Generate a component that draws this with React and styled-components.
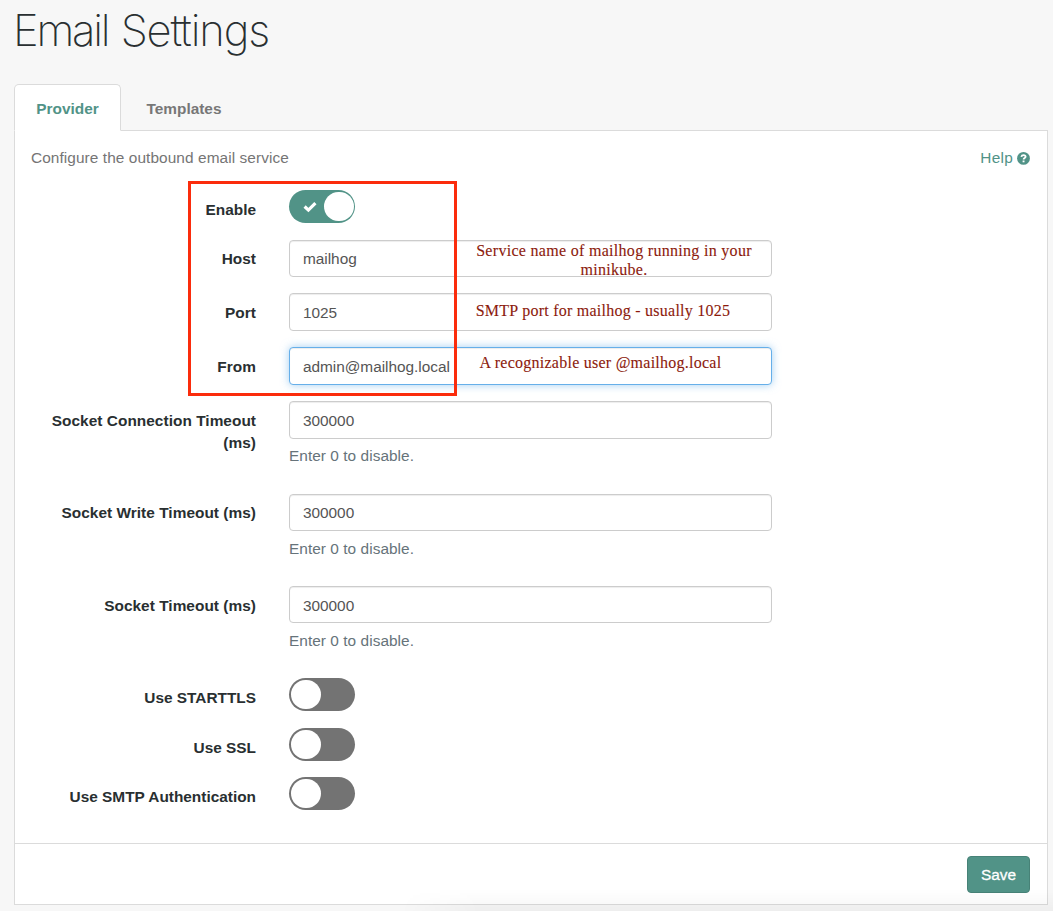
import React from "react";
import styled, { createGlobalStyle, css } from "styled-components";

const GREEN = "#519387";
const LINE = "#dbdbdb";

const GlobalStyle = createGlobalStyle`
  * { box-sizing: border-box; }
  body {
    margin: 0;
    background: #f7f7f7;
    color: #292f31;
    font: 15.4px/22px "Liberation Sans", Arial, sans-serif;
    overflow: hidden;
  }
`;

const Page = styled.main`
  position: relative;
  height: 911px;
  padding: 5px 5px 0 14px;
  display: flex;
  flex-direction: column;
`;

const Title = styled.h1`
  margin: 0 0 29px -1px;
  height: 50px;
  font: 200 43.5px/50px Inter, "Liberation Sans", sans-serif;
  white-space: nowrap;
`;

const Word = styled.span`
  letter-spacing: ${(p) => p.$spacing}px;
`;

const Tabs = styled.nav`
  display: flex;
  height: 47px;
  margin-bottom: -1px;
  position: relative;
`;

const Tab = styled.a`
  display: flex;
  align-items: center;
  justify-content: center;
  width: ${(p) => p.$width}px;
  padding-top: 2px;
  font-weight: bold;
  color: #777;
  border: 1px solid transparent;
  ${(p) =>
    p.$active &&
    css`
      color: ${GREEN};
      background: #fff;
      border-color: ${LINE};
      border-bottom-color: #fff;
      border-radius: 5px 5px 0 0;
    `}
`;

const Panel = styled.section`
  height: 775px;
  background: #fff;
  border: 1px solid ${LINE};
  display: flex;
  flex-direction: column;
`;

const Intro = styled.div`
  display: flex;
  justify-content: space-between;
  padding: 16px 17px 0 16px;
  height: 59px;
  color: #757575;
  letter-spacing: 0.08px;
`;

const HelpLink = styled.a`
  display: flex;
  align-items: center;
  gap: 4px;
  height: 22px;
  color: ${GREEN};
  letter-spacing: 0.25px;
`;

const Row = styled.div`
  display: grid;
  grid-template-columns: 241px 483px;
  column-gap: 33px;
  align-items: start;
  height: ${(p) => p.$height}px;
`;

const Label = styled.label`
  padding: ${(p) => p.$top}px 0 0 16px;
  text-align: right;
  font-weight: bold;
  letter-spacing: ${(p) => p.$spacing ?? 0.04}px;
`;

const Field = styled.div`
  position: relative;
  display: flex;
  flex-direction: column;
`;

const Input = styled.input`
  width: 100%;
  height: ${(p) => (p.$tall ? 38 : 37)}px;
  padding: ${(p) => p.$drop || 0}px 13px 0;
  border: 1px solid #ccc;
  border-radius: 4px;
  background: #fff;
  box-shadow: inset 0 1px 1px rgba(0, 0, 0, 0.075);
  color: #555;
  font: inherit;
  letter-spacing: -0.03px;
  outline: none;
  ${(p) =>
    p.$focused &&
    css`
      border-color: #66afe9;
      box-shadow: inset 0 1px 1px rgba(0, 0, 0, 0.075), 0 0 8px rgba(102, 175, 233, 0.6);
    `}
`;

const Hint = styled.p`
  margin: ${(p) => p.$gap}px 0 0;
  color: #66737a;
  letter-spacing: 0.05px;
`;

const Note = styled.div`
  position: absolute;
  left: ${(p) => p.$left}px;
  top: ${(p) => p.$top}px;
  width: ${(p) => p.$width}px;
  text-align: center;
  white-space: nowrap;
  font: 16px/19px "Liberation Serif", "Times New Roman", serif;
  letter-spacing: ${(p) => p.$spacing}px;
  color: #8c1a0c;
  -webkit-text-stroke: 0.1px #8c1a0c;
`;

const Switch = styled.span`
  display: flex;
  align-items: center;
  justify-content: ${(p) => (p.$on ? "flex-end" : "flex-start")};
  gap: 7px;
  width: 66px;
  height: 33px;
  padding: 0 ${(p) => (p.$on ? 1.5 : 2)}px;
  border-radius: 17px;
  background: ${(p) => (p.$on ? GREEN : "#737373")};
`;

const Knob = styled.span`
  width: 29.5px;
  height: 29.5px;
  border-radius: 50%;
  background: #fff;
`;

const Footer = styled.footer`
  display: flex;
  justify-content: flex-end;
  align-items: flex-start;
  flex: 1;
  padding: 12px 17px 0;
  border-top: 1px solid ${LINE};
`;

const SaveButton = styled.button`
  width: 63px;
  height: 37px;
  padding: 0;
  border: 1px solid #478277;
  border-radius: 4px;
  background: ${GREEN};
  color: #fff;
  font: inherit;
  -webkit-text-stroke: 0.3px #fff;
`;

const Highlight = styled.div`
  position: absolute;
  left: 188px;
  top: 181px;
  width: 269px;
  height: 215px;
  border: 3px solid #fb2c0c;
`;

const BottomShade = styled.div`
  position: absolute;
  left: 400px;
  right: 0;
  bottom: 0;
  height: 22px;
  pointer-events: none;
  background: linear-gradient(to bottom, transparent, rgba(0, 0, 0, 0.035));
  mask-image: linear-gradient(to right, transparent, #000 80px);
`;

const HelpIcon = () => (
  <svg width="13" height="13" viewBox="0 0 13 13">
    <circle cx="6.5" cy="6.4" r="6.4" fill={GREEN} />
    <path d="M4.3 4.9C4.6 3.6 5.4 3.1 6.5 3.1c1.3 0 2.1.7 2.1 1.6 0 1.4-2 1.4-2 2.9" fill="none" stroke="#fff" strokeWidth="1.8" />
    <path d="M5.6 8.5h1.9v1.8H5.6z" fill="#fff" />
  </svg>
);

const CheckIcon = () => (
  <svg width="14" height="12" viewBox="0 0 14 12">
    <path d="M1.6 5.5l3.8 3.6 7-7" fill="none" stroke="#fff" strokeWidth="3.2" />
  </svg>
);

const Toggle = ({ label, on, height }) => (
  <Row $height={height}>
    <Label $top={9} $spacing={0}>{label}</Label>
    <Switch $on={on} role="switch" aria-checked={!!on}>
      {on && <CheckIcon />}
      <Knob />
    </Switch>
  </Row>
);

const TextField = ({ label, value, height, tall, focused, hintGap, drop, labelTop = 9, children }) => (
  <Row $height={height}>
    <Label $top={labelTop}>{label}</Label>
    <Field>
      <Input defaultValue={value} $tall={tall} $focused={focused} $drop={drop} />
      {hintGap && <Hint $gap={hintGap}>Enter 0 to disable.</Hint>}
      {children}
    </Field>
  </Row>
);

export default function App() {
  return (
    <>
      <GlobalStyle />
      <Page>
        <Title>
          <Word $spacing={-2.2}>Email</Word> <Word $spacing={-1.15}><Word $spacing={-1.15}>Settings</Word></Word>
        </Title>
        <Tabs>
          <Tab $active $width={107}>Provider</Tab>
          <Tab $width={126}>Templates</Tab>
        </Tabs>
        <Panel>
          <Intro>
            <span>Configure the outbound email service</span>
            <HelpLink>
              Help <HelpIcon />
            </HelpLink>
          </Intro>
          <Toggle label="Enable" on height={50} />
          <TextField label="Host" value="mailhog" height={53} labelTop={8}>
            <Note $left={186} $top={1} $width={278} $spacing={0.3}>
              Service name of mailhog running in your
              <br />
              minikube.
            </Note>
          </TextField>
          <TextField label="Port" value="1025" height={54} tall drop={2}>
            <Note $left={186} $top={8} $width={256} $spacing={0.25}>
              SMTP port for mailhog - usually 1025
            </Note>
          </TextField>
          <TextField label="From" value="admin@mailhog.local" height={54} tall drop={2} focused>
            <Note $left={190} $top={6} $width={243} $spacing={0.25}>
              A recognizable user @mailhog.local
            </Note>
          </TextField>
          <TextField label="Socket Connection Timeout (ms)" value="300000" height={93} tall drop={2} hintGap={6} />
          <TextField label="Socket Write Timeout (ms)" value="300000" height={92} hintGap={7} labelTop={8} />
          <TextField label="Socket Timeout (ms)" value="300000" height={92} drop={2} hintGap={7} />
          <Toggle label="Use STARTTLS" height={50} />
          <Toggle label="Use SSL" height={49} />
          <Toggle label="Use SMTP Authentication" height={66} />
          <Footer>
            <SaveButton>Save</SaveButton>
          </Footer>
        </Panel>
        <Highlight />
        <BottomShade />
      </Page>
    </>
  );
}
